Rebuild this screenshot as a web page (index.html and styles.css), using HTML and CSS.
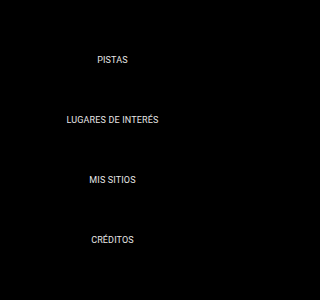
FILE: index.html
```html
<!DOCTYPE html>
<html lang="es">
<head>
<meta charset="utf-8">
<link rel="stylesheet" href="styles.css">
</head>
<body>
<nav class="menu">
  <div class="item">PISTAS</div>
  <div class="item">LUGARES DE INTERÉS</div>
  <div class="item">MIS SITIOS</div>
  <div class="item">CRÉDITOS</div>
</nav>
</body>
</html>
```
FILE: styles.css
```css
html, body {
  margin: 0;
  padding: 0;
  background: #000;
  width: 225px;
  height: 300px;
  overflow: hidden;
}
.menu {
  box-sizing: border-box;
  height: 300px;
  padding: 30px 0;
  display: grid;
  grid-template-rows: repeat(4, 60px);
  justify-items: center;
  align-items: center;
}
.item {
  font-family: Roboto, "Noto Sans", sans-serif;
  font-size: 9px;
  line-height: 12px;
  color: #e6e6e6;
  letter-spacing: 0.15px;
}
```
